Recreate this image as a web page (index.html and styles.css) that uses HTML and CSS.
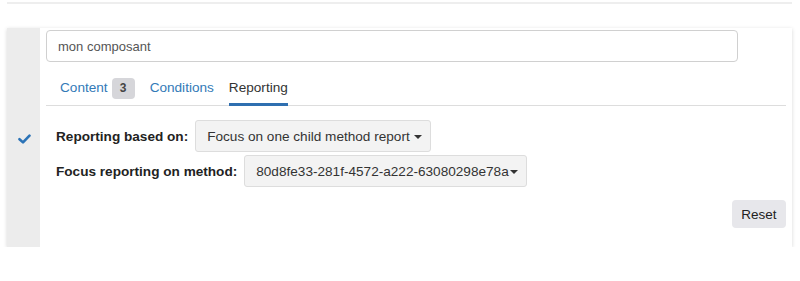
FILE: index.html
```html
<!doctype html>
<html lang="fr">
<head>
  <meta charset="UTF-8">
  <title>Composant</title>
  <link rel="stylesheet" href="styles.css">
</head>
<body>
  <div class="divider"></div>
  <div class="card">
    <div class="status">
      <svg class="check" width="13" height="10" viewBox="0 0 13 10">
        <path d="M1.5 5.2 L5 8.4 L11.5 1.6" fill="none" stroke="#2b73b7" stroke-width="2.6" stroke-linecap="round" stroke-linejoin="round"/>
      </svg>
    </div>
    <div class="main">
      <input class="name" type="text" value="mon composant">
      <ul class="tabs">
        <li><a href="#">Content</a> <span class="badge">3</span></li>
        <li><a href="#">Conditions</a></li>
        <li class="active"><a href="#">Reporting</a></li>
      </ul>
      <div class="form">
        <div class="row">
          <label>Reporting based on:</label>
          <button class="select" type="button">Focus on one child method report <span class="caret"></span></button>
        </div>
        <div class="row">
          <label>Focus reporting on method:</label>
          <button class="select" type="button">80d8fe33-281f-4572-a222-63080298e78a<span class="caret"></span></button>
        </div>
      </div>
      <div class="actions">
        <button class="reset" type="button">Reset</button>
      </div>
    </div>
  </div>
</body>
</html>
```

FILE: styles.css
```css
body {
  margin: 0px;
  padding: 0px;
  background-color: #ffffff;
  font-family: 'Liberation Sans', Arial, sans-serif;
  color: #333333;
}

.divider {
  height: 2px;
  margin: 2px 8px 0px 7px;
  background-color: #eeeeee;
}

.card {
  display: flex;
  margin: 24px 8px 0px 7px;
  height: 219px;
  background-color: #ffffff;
  box-shadow: 0px 1px 4px rgba(0, 0, 0, 0.16);
}

.status {
  width: 33px;
  flex-shrink: 0;
  background-color: #ececec;
  display: flex;
  justify-content: center;
  padding-top: 106px;
  box-sizing: border-box;
}

.check {
  display: block;
  margin-left: 2px;
}

.main {
  flex: 1;
  padding: 2px 6px 0px 6px;
}

.name {
  display: block;
  box-sizing: border-box;
  width: 692px;
  height: 32px;
  margin: 0px;
  padding: 0px 11px;
  border: 1px solid #d0d0d0;
  border-radius: 4px;
  font: 13px 'Liberation Sans', Arial, sans-serif;
  color: #555555;
}

.tabs {
  list-style: none;
  margin: 0px;
  padding: 0px 0px 0px 14px;
  display: flex;
  gap: 15px;
  height: 44px;
  border-bottom: 1px solid #dddddd;
  box-sizing: border-box;
}

.tabs li {
  display: flex;
  align-items: center;
  padding-top: 9px;
  border-bottom: 3px solid transparent;
  margin-bottom: -1px;
  font-size: 13.6px;
}

.tabs li.active {
  border-bottom-color: #2f6fb0;
}

.tabs a {
  text-decoration: none;
  color: #337ab7;
}

.tabs li.active a {
  color: #333333;
}

.badge {
  display: inline-block;
  width: 23px;
  height: 21px;
  line-height: 21px;
  margin-left: 4px;
  margin-top: 2px;
  text-align: center;
  border-radius: 4px;
  background-color: #d6d6da;
  color: #444444;
  font-size: 12px;
  font-weight: bold;
}

.form {
  padding: 14px 0px 0px 10px;
}

.row {
  display: flex;
  align-items: center;
  gap: 7px;
  margin-bottom: 3px;
}

.row label {
  font-size: 13.6px;
  font-weight: bold;
  color: #222222;
}

.select {
  height: 32px;
  padding: 0px 8px 0px 11px;
  border: 1px solid #dddddd;
  border-radius: 3px;
  background-color: #f3f3f3;
  font: 13.6px 'Liberation Sans', Arial, sans-serif;
  color: #333333;
}

.caret {
  display: inline-block;
  width: 0px;
  height: 0px;
  margin-left: 1px;
  vertical-align: middle;
  border-top: 4px solid #333333;
  border-left: 4px solid transparent;
  border-right: 4px solid transparent;
}

.actions {
  display: flex;
  justify-content: flex-end;
  padding-top: 10px;
}

.reset {
  width: 54px;
  height: 28px;
  border: none;
  border-radius: 4px;
  background-color: #e7e7eb;
  font: 13.5px 'Liberation Sans', Arial, sans-serif;
  color: #222222;
}
```
